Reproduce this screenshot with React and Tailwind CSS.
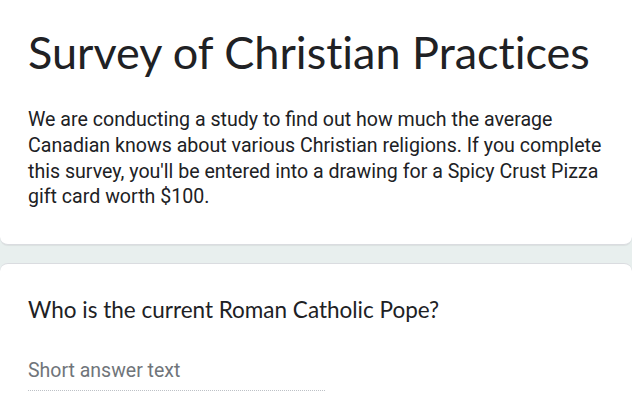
import React from "react";

const App = () => {
  return (
    <div className="w-[632px] h-[417px] overflow-hidden bg-[#e8efee]">
      {/* header card */}
      <div className="bg-white rounded-b-lg border-b border-[#dadce0] shadow-[0_1px_1px_rgba(0,0,0,0.06)] h-[245px] px-[28px] pt-[24px]">
        <h1 className="text-[45px] leading-[56px] text-[#202124] font-['Lato',sans-serif] whitespace-nowrap [font-variant-ligatures:none]">
          Survey of Christian Practices
        </h1>
        <p className="mt-[27px] -mr-[4px] text-[19.6px] leading-[25.8px] text-[#202124] font-['Roboto',sans-serif]">
          We are conducting a study to find out how much the average Canadian knows about various Christian religions. If you complete this survey, you'll be entered into a drawing for a Spicy Crust Pizza gift card worth $100.
        </p>
      </div>

      {/* question card */}
      <div className="mt-[18px] bg-white rounded-t-lg border-t border-[#dadce0] h-[200px] px-[28px] pt-[31px]">
        <div className="text-[22.5px] leading-[30px] text-[#202124] font-['Lato',sans-serif] [font-variant-ligatures:none]">
          Who is the current Roman Catholic Pope?
        </div>
        <div className="mt-[34px] w-[297px] border-b border-dotted border-[#bdc1c6] pb-[7px] text-[19.5px] leading-[24px] text-[#70757a] font-['Roboto',sans-serif]">
          Short answer text
        </div>
      </div>
    </div>
  );
};

export default App;
